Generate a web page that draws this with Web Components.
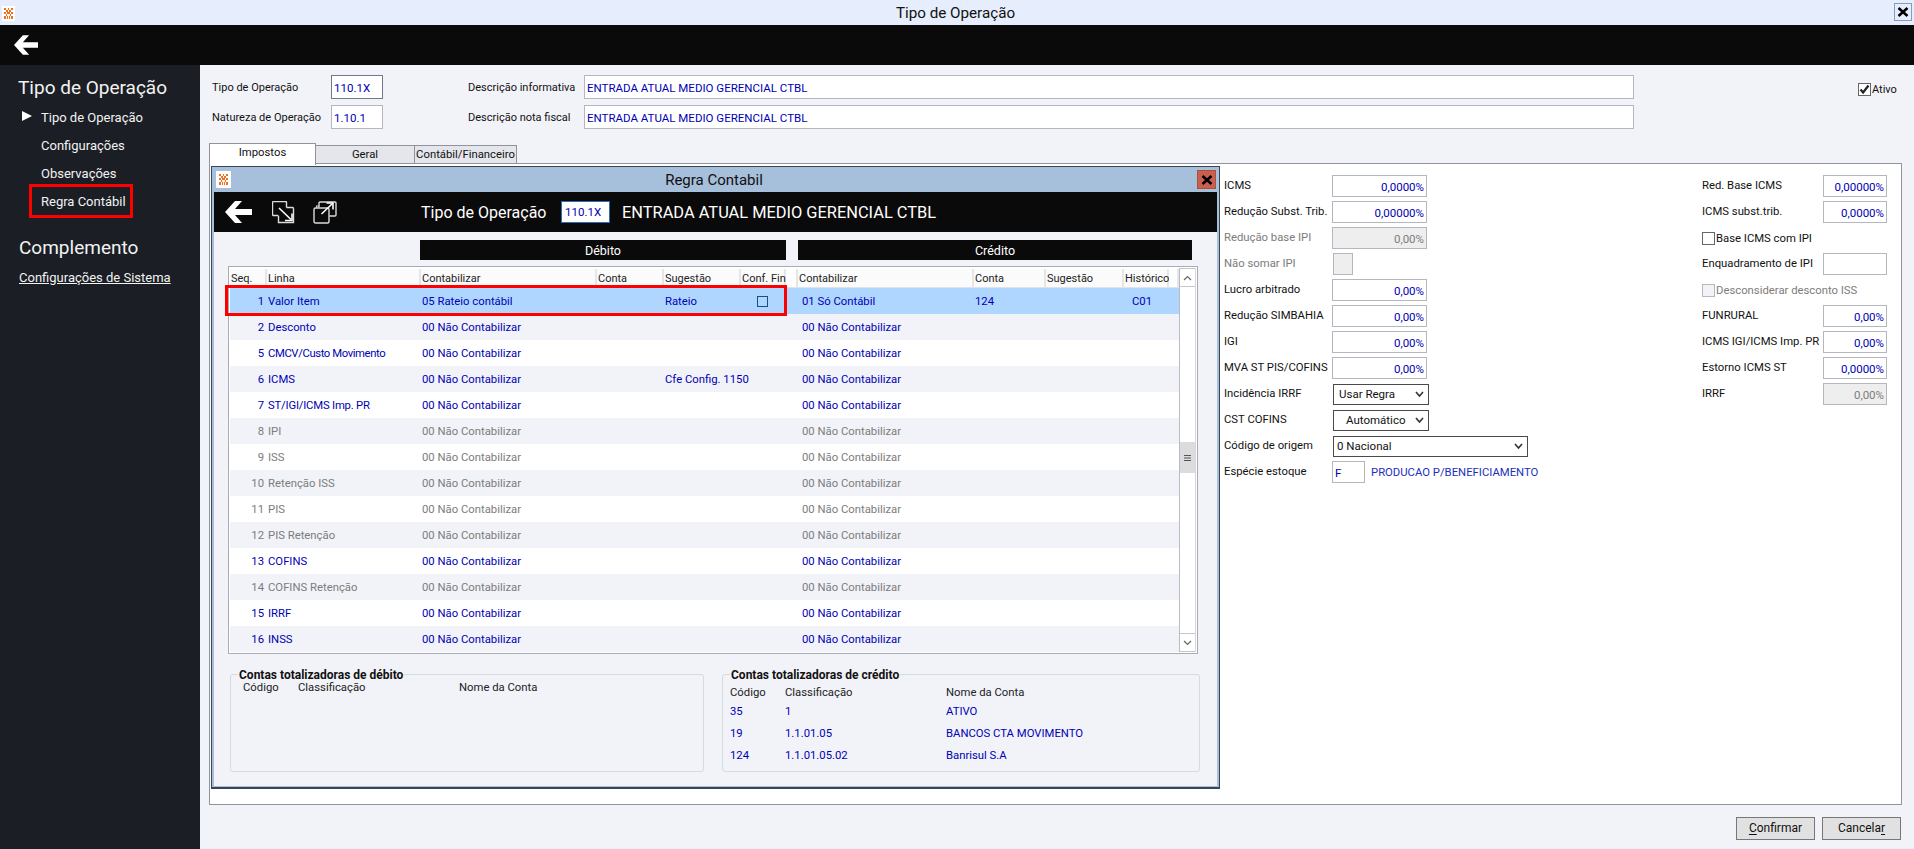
<!DOCTYPE html>
<html lang="pt-BR">
<head>
<meta charset="utf-8">
<title>Tipo de Operação</title>
<style>
  html, body { margin: 0; padding: 0; height: 100%; overflow: hidden; }
  body { font: 11px Roboto, "Liberation Sans", sans-serif; color: #111; background: #f1f3f9; }
  .main { display: flex; height: 784px; }
</style>
</head>
<body>
<erp-titlebar>Tipo de Operação</erp-titlebar>
<erp-toolbar></erp-toolbar>
<div class="main">
  <erp-sidebar></erp-sidebar>
  <erp-content></erp-content>
</div>
<script>
const BLUE = '#0000b4'
const GRAY = '#7c7c7c'

const logo = `<svg width="13" height="15" viewBox="0 0 13 15"><rect width="13" height="15" fill="#fff"/><path d="M2 2h2v2H2zM6 2h1v2H6zM9 2h2v2H9zM4 4h2v2H4zM7 4h2v2H7zM2 6h2v2H2zM5 6h3v2H5zM9 6h2v2H9zM4 8h1v2H4zM8 8h1v2H8zM2 10h2v3H2zM5 10h1v3H5zM7 10h1v3H7zM9 10h2v3H9z" fill="#f0701e"/></svg>`
const closeX = `<svg width="12" height="10" viewBox="0 0 12 10"><path d="M1.5 1l9 8M10.5 1l-9 8" stroke="#000" stroke-width="2.6" fill="none"/></svg>`
const backArrow = (w, h) => `<svg width="${w}" height="${h}" viewBox="0 0 27 22"><path d="M0 11 10 0h7l-7 8h17v6H10l7 8h-7z" fill="#fff"/></svg>`

class ErpTitlebar extends HTMLElement {
  constructor () {
    super()
    this.attachShadow({ mode: 'open' }).innerHTML = `
    <style>
      :host { display: flex; align-items: center; height: 25px; background: #e6edfd; padding: 0 2px; box-sizing: border-box; font-size: 15.2px; color: #111; }
      .logo { display: flex; width: 13px; margin-top: 1px; }
      .title { flex: 1; text-align: center; padding-left: 2px; }
      .close { display: flex; align-items: center; justify-content: center; width: 16px; height: 16px; border: 1px solid #8b9bbd; margin: -1px 0 0; }
    </style>
    <span class="logo">${logo}</span>
    <span class="title"><slot></slot></span>
    <span class="close">${closeX}</span>`
  }
}

class ErpToolbar extends HTMLElement {
  constructor () {
    super()
    this.attachShadow({ mode: 'open' }).innerHTML = `
    <style>
      :host { display: flex; align-items: center; height: 40px; background: #0a0a0a; padding-left: 14px; }
      svg { display: block; }
    </style>
    ${backArrow(24, 20)}`
  }
}

class ErpSidebar extends HTMLElement {
  constructor () {
    super()
    this.attachShadow({ mode: 'open' }).innerHTML = `
    <style>
      :host { display: block; width: 200px; flex: none; background: #1b1e25; color: #f2f2f2; padding-top: 12px; box-sizing: border-box; }
      h2 { margin: 0 0 4px 18px; font-size: 19px; line-height: 22px; font-weight: 400; }
      h2.second { margin: 22px 0 4px 19px; }
      .item { position: relative; display: flex; align-items: center; height: 28px; padding-left: 22px; font-size: 13px; }
      .mark { width: 10px; margin-right: 9px; flex: none; height: 10px; margin-top: -2px; }
      .mark.on { background: #fff; clip-path: polygon(0 0, 100% 50%, 0 100%); }
      .hl { position: absolute; left: 29px; top: -3px; width: 104px; height: 34px; box-sizing: border-box; border: 3px solid #f00; }
      .link { display: flex; align-items: center; height: 28px; padding-left: 19px; font-size: 13px; text-decoration: underline; }
    </style>
    <h2>Tipo de Operação</h2>
    <div class="item"><span class="mark on"></span>Tipo de Operação</div>
    <div class="item"><span class="mark"></span>Configurações</div>
    <div class="item"><span class="mark"></span>Observações</div>
    <div class="item"><span class="mark"></span>Regra Contábil<span class="hl"></span></div>
    <h2 class="second">Complemento</h2>
    <div class="link">Configurações de Sistema</div>`
  }
}

class ErpInput extends HTMLElement {
  constructor () {
    super()
    const w = this.getAttribute('w') || 64
    const h = this.getAttribute('h') || 22
    const disabled = this.hasAttribute('disabled')
    this.attachShadow({ mode: 'open' }).innerHTML = `
    <style>
      :host { display: block; flex: none; width: ${w}px; height: ${h}px; box-sizing: border-box; border: 1px solid ${this.hasAttribute('strong') ? '#6f7a8a' : '#b4b8be'}; background: ${disabled ? '#eee' : '#fff'}; color: ${disabled ? GRAY : BLUE}; font-size: 11.5px; line-height: ${h - 2}px; padding: 1px 2px 0 2px; overflow: hidden; white-space: nowrap; }
      :host([right]) { text-align: right; }
    </style><slot></slot>`
  }
}

class ErpCheck extends HTMLElement {
  constructor () {
    super()
    const disabled = this.hasAttribute('disabled')
    const checked = this.hasAttribute('checked')
    this.attachShadow({ mode: 'open' }).innerHTML = `
    <style>
      :host { display: flex; align-items: center; height: 22px; color: ${disabled ? GRAY : '#111'}; }
      .box { width: 13px; height: 13px; flex: none; margin-right: 1px; box-sizing: border-box; border: 1px solid ${disabled ? '#b8b8b8' : '#666'}; background: ${disabled ? '#f1f3f9' : '#fff'}; display: flex; }
    </style>
    <span class="box">${checked ? '<svg width="11" height="11" viewBox="0 0 11 11"><path d="M1.5 5.5l2.6 3L9.5 1.5" stroke="#222" stroke-width="2.2" fill="none"/></svg>' : ''}</span><slot></slot>`
  }
}

class ErpSelect extends HTMLElement {
  constructor () {
    super()
    const w = this.getAttribute('w') || 96
    this.attachShadow({ mode: 'open' }).innerHTML = `
    <style>
      :host { display: flex; align-items: center; flex: none; width: ${w}px; height: 21px; box-sizing: border-box; border: 1px solid #4a4a4a; background: #fff; padding: 0 4px 0 ${this.getAttribute('pad') || 5}px; font-size: 11.5px; }
      .text { flex: 1; }
    </style>
    <span class="text"><slot></slot></span>
    <svg width="9" height="7" viewBox="0 0 9 7"><path d="M1 1l3.5 4L8 1" stroke="#333" stroke-width="1.6" fill="none"/></svg>`
  }
}

class ErpHeader extends HTMLElement {
  constructor () {
    super()
    this.attachShadow({ mode: 'open' }).innerHTML = `
    <style>
      :host { display: grid; grid-template-columns: 119px 53px 84px 116px 1050px auto; grid-auto-rows: 24px; row-gap: 6px; padding: 10px 0 0 12px; align-items: center; height: 54px; }
      .ativo { margin-left: 224px; padding-top: 4px; }
    </style>
    <span>Tipo de Operação</span><erp-input w="52" h="24" strong>110.1X</erp-input><span></span>
    <span>Descrição informativa</span><erp-input w="1050" h="24">ENTRADA ATUAL MEDIO GERENCIAL CTBL</erp-input>
    <erp-check class="ativo" checked>Ativo</erp-check>
    <span>Natureza de Operação</span><erp-input w="52" h="24">1.10.1</erp-input><span></span>
    <span>Descrição nota fiscal</span><erp-input w="1050" h="24">ENTRADA ATUAL MEDIO GERENCIAL CTBL</erp-input>`
  }
}

class ErpTabs extends HTMLElement {
  constructor () {
    super()
    this.attachShadow({ mode: 'open' }).innerHTML = `
    <style>
      :host { display: flex; align-items: flex-end; height: 20px; margin: 14px 0 0 9px; position: relative; z-index: 1; }
      .tab { box-sizing: border-box; height: 18px; width: 100px; border: 1px solid #8f949c; border-bottom: 0; background: #e4e6ec; text-align: center; line-height: 18px; margin-left: -1px; font-size: 11.3px; }
      .on { width: 107px; height: 22px; margin: 0 0 -2px; background: #fff; line-height: 18px; padding-bottom: 3px; }
      .last { width: 103px; }
    </style>
    <div class="tab on">Impostos</div>
    <div class="tab">Geral</div>
    <div class="tab last">Contábil/Financeiro</div>`
  }
}

class RegraWindow extends HTMLElement {
  constructor () {
    super()
    this.attachShadow({ mode: 'open' }).innerHTML = `
    <style>
      :host { display: block; flex: none; width: 1009px; height: 623px; box-sizing: border-box; border: 1px solid #3a4452; border-bottom-width: 2px; background: #a6bfdb; padding: 0 2px 3px; margin: 2px 0 0 1px; }
      .title { display: flex; align-items: center; height: 25px; font-size: 15px; color: #111; }
      .logo { display: flex; padding: 1px; background: #fff; margin: 0 0 0 2px; }
      .name { flex: 1; text-align: center; }
      .close { display: flex; align-items: center; justify-content: center; width: 17px; height: 17px; background: #c9604e; border: 1px solid #a9503f; margin-right: 1px; }
      .bar { display: flex; align-items: center; height: 40px; background: #0a0a0a; color: #fff; font-size: 16.4px; padding-left: 11px; }
      .bar svg { display: block; flex: none; }
      .i1 { margin-left: 20px; }
      .i2 { margin-left: 18px; }
      .op { margin-left: 84px; width: 140px; white-space: nowrap; font-size: 16px; }
      .code { box-sizing: border-box; width: 49px; height: 22px; background: #fff; border: 1px solid #2e6cb0; color: ${BLUE}; font-size: 11.5px; line-height: 20px; padding-left: 3px; margin-right: 12px; }
      .body { height: 554px; background: #f1f3f9; padding-top: 8px; box-sizing: border-box; }
      .heads { display: flex; margin-left: 206px; gap: 12px; }
      .head { height: 20px; background: #0a0a0a; color: #fff; text-align: center; line-height: 21px; font-size: 12.5px; }
      .boxes { display: flex; margin: 20px 0 0 16px; gap: 18px; }
    </style>
    <div class="title"><span class="logo">${logo}</span><span class="name">Regra Contabil</span><span class="close">${closeX}</span></div>
    <div class="bar">
      ${backArrow(27, 22)}
      <svg class="i1" width="23" height="23" viewBox="0 0 23 23" fill="none" stroke="#dcdcdc" stroke-width="1.4"><path d="M6 14.500H1.500a1 1 0 0 1-1-1V1.500a1 1 0 0 1 1-1h12a1 1 0 0 1 1 1V6.500"/><path d="M6.500 14.500v7h15V7.500a1 1 0 0 0-1-1h-6"/><path d="M7 7l12 11.500" stroke="#fff" stroke-width="1.6"/><path d="M20 12.500v7h-7" stroke="#fff" stroke-width="1.6"/></svg>
      <svg class="i2" width="24" height="23" viewBox="0 0 24 23" fill="none" stroke="#dcdcdc" stroke-width="1.4"><rect x="1" y="7" width="15" height="15" rx="1.500"/><path d="M6 6.500V2a1 1 0 0 1 1-1h15a1 1 0 0 1 1 1v12a1 1 0 0 1-1 1h-5.500"/><path d="M3.500 6.500V5h2.500" stroke-width="1.100"/><path d="M8.500 13l11-10.500" stroke="#fff" stroke-width="1.600"/><path d="M13.500 2h6.500v6.500" stroke="#fff" stroke-width="1.600"/></svg>
      <span class="op">Tipo de Operação</span>
      <span class="code">110.1X</span>
      <span>ENTRADA ATUAL MEDIO GERENCIAL CTBL</span>
    </div>
    <div class="body">
      <div class="heads"><div class="head" style="width:366px">Débito</div><div class="head" style="width:394px">Crédito</div></div>
      <regra-grid></regra-grid>
      <div class="boxes">
        <totals-box w="474" off="13" title="Contas totalizadoras de débito"></totals-box>
        <totals-box w="478" off="8" title="Contas totalizadoras de crédito" rows="35|1|ATIVO;19|1.1.01.05|BANCOS CTA MOVIMENTO;124|1.1.01.05.02|Banrisul S.A"></totals-box>
      </div>
    </div>`
  }
}

const GRID_COLS = '37px 154px 176px 67px 77px 45px 12px 176px 72px 78px 45px 10px'
// caps run wider here than in the original font, hence the spacing on the two long names
const GRID_ROWS = [
  ['1', 'Valor Item', 1], ['2', 'Desconto', 1], ['5', 'CMCV/Custo Movimento', 1, -0.4], ['6', 'ICMS', 1],
  ['7', 'ST/IGI/ICMS Imp. PR', 1, -0.2], ['8', 'IPI', 0], ['9', 'ISS', 0], ['10', 'Retenção ISS', 0],
  ['11', 'PIS', 0], ['12', 'PIS Retenção', 0], ['13', 'COFINS', 1], ['14', 'COFINS Retenção', 0],
  ['15', 'IRRF', 1], ['16', 'INSS', 1]
]

class RegraGrid extends HTMLElement {
  constructor () {
    super()
    const heads = ['Seq.', 'Linha', 'Contabilizar', 'Conta', 'Sugestão', 'Conf. Fin', '', 'Contabilizar', 'Conta', 'Sugestão', 'Histórico', '']
    const rows = GRID_ROWS.map((r, i) => {
      const first = i === 0
      const cls = first ? 'sel' : (i % 2 ? 'alt' : '')
      return `<div class="row ${cls}" style="color:${r[2] ? BLUE : GRAY}">
        <span class="seq">${r[0]}</span><span style="letter-spacing:${r[3] || 0}px">${r[1]}</span>
        <span>${first ? '05 Rateio contábil' : '00 Não Contabilizar'}</span><span></span>
        <span>${first ? 'Rateio' : (r[1] === 'ICMS' ? 'Cfe Config. 1150' : '')}</span>
        <span>${first ? '<i class="chk"></i>' : ''}</span><span></span>
        <span class="cr">${first ? '01 Só Contábil' : '00 Não Contabilizar'}</span>
        <span>${first ? '124' : ''}</span><span></span>
        <span class="hist">${first ? 'C01' : ''}</span><span></span>
      </div>`
    }).join('')
    this.attachShadow({ mode: 'open' }).innerHTML = `
    <style>
      :host { display: flex; position: relative; width: 970px; height: 388px; box-sizing: border-box; margin: 6px 0 0 14px; border: 1px solid #a9adb3; padding: 1px; background: #fff; font-size: 11.3px; }
      .table { width: 949px; flex: none; }
      .row, .hrow { display: grid; grid-template-columns: ${GRID_COLS}; align-items: center; white-space: nowrap; }
      .hrow { height: 20px; color: #222; font-size: 11px; }
      .hrow span { height: 19px; line-height: 19px; background: #fbfbfb; border-right: 2px solid #e4e6ea; border-bottom: 1px solid #dfe2e6; padding-left: 1px; box-sizing: border-box; }
      .hrow span.blank { background: #fff; }
      .row { height: 26px; background: #fff; }
      .row span { padding-left: 1px; }
      .alt { background: #f1f3f9; }
      .sel { background: #aed6ff; }
      .seq { text-align: right; padding-right: 3px; }
      .cr { padding-left: 4px !important; }
      .hist { padding-left: 8px !important; }
      .chk { display: block; width: 11px; height: 11px; box-sizing: border-box; border: 1px solid #134f8c; margin-left: 15px; }
      .bar { width: 17px; flex: none; box-sizing: border-box; display: flex; flex-direction: column; border-left: 1px solid #b9bdc3; border-right: 1px solid #d6d8dc; }
      .btn { height: 17px; display: flex; align-items: center; justify-content: center; border-bottom: 1px solid #c4c7cc; border-top: 1px solid #c4c7cc; flex: none; background: #fff; }
      .track { height: 155px; flex: none; }
      .thumb { height: 31px; flex: none; background: #dcdcde; display: flex; align-items: center; justify-content: center; }
      .track2 { flex: 1; }
      .hl { position: absolute; left: -4px; top: 18px; width: 562px; height: 31px; box-sizing: border-box; border: 3px solid #f00; }
    </style>
    <div class="table">
      <div class="hrow">${heads.map(h => `<span class="${h ? '' : 'blank'}">${h}</span>`).join('')}</div>
      ${rows}
    </div>
    <div class="bar">
      <div class="btn"><svg width="9" height="6" viewBox="0 0 9 6"><path d="M1 5l3.5-3.5L8 5" stroke="#666" stroke-width="1.2" fill="none"/></svg></div>
      <div class="track"></div>
      <div class="thumb"><svg width="9" height="8" viewBox="0 0 9 8"><path d="M1 1.5h7M1 4h7M1 6.500h7" stroke="#555" stroke-width="1.2"/></svg></div>
      <div class="track2"></div>
      <div class="btn"><svg width="9" height="6" viewBox="0 0 9 6"><path d="M1 1l3.5 3.500L8 1" stroke="#666" stroke-width="1.2" fill="none"/></svg></div>
    </div>
    <div class="hl"></div>`
  }
}

class TotalsBox extends HTMLElement {
  constructor () {
    super()
    const off = this.getAttribute('off')
    const rows = (this.getAttribute('rows') || '').split(';').filter(Boolean).map(r => r.split('|'))
    const hasRows = rows.length > 0
    this.attachShadow({ mode: 'open' }).innerHTML = `
    <style>
      :host { display: block; box-sizing: border-box; flex: none; width: ${this.getAttribute('w')}px; height: 98px; border: 1px solid #d4dade; border-radius: 3px; padding-left: ${off - 1}px; font-size: 11.3px; }
      .legend { display: block; width: max-content; height: 14px; line-height: 14px; margin: -7px 0 0 ${8 - off}px; padding: 0 1px; background: #f1f3f9; font-weight: 700; font-size: 12px; color: #111; }
      .row { display: grid; grid-template-columns: 55px 161px auto; height: 22px; align-items: center; }
      .cols { height: 14px; margin-top: ${hasRows ? 3 : -2}px; margin-bottom: 1px; color: #222; }
      .val { color: ${BLUE}; }
    </style>
    <span class="legend">${this.getAttribute('title')}</span>
    <div class="row cols"><span>Código</span><span>Classificação</span><span>Nome da Conta</span></div>
    ${rows.map(r => `<div class="row val"><span>${r[0]}</span><span>${r[1]}</span><span>${r[2]}</span></div>`).join('')}`
  }
}

class FiscalForm extends HTMLElement {
  constructor () {
    super()
    const field = (label, value, gray) => `<span class="lbl${gray ? ' off' : ''}">${label}</span>${value}`
    const pct = (v, w, dis) => `<erp-input w="${w}" right${dis ? ' disabled' : ''}>${v}</erp-input>`
    this.attachShadow({ mode: 'open' }).innerHTML = `
    <style>
      :host { display: flex; flex: none; padding: 11px 0 0 4px; font-size: 11.3px; }
      .col { display: grid; align-items: center; grid-auto-rows: 22px; row-gap: 4px; align-content: start; }
      .left { width: 478px; grid-template-columns: 108px auto; }
      .right { grid-template-columns: 121px auto; }
      .lbl { padding-bottom: 1px; white-space: nowrap; }
      .off { color: ${GRAY}; }
      .wide { grid-column: 1 / span 2; }
      .esp { display: flex; align-items: center; gap: 6px; }
      .esp b { font-weight: 400; color: #1a2fc0; white-space: nowrap; }
      .nosum { display: block; box-sizing: border-box; width: 20px; height: 22px; background: #eee; border: 1px solid #b4b8be; }
    </style>
    <div class="col left">
      ${field('ICMS', pct('0,0000%', 95))}
      ${field('Redução Subst. Trib.', pct('0,00000%', 95))}
      ${field('Redução base IPI', pct('0,00%', 95, 1), 1)}
      ${field('Não somar IPI', '<span class="nosum" style="margin-left:1px"></span>', 1)}
      ${field('Lucro arbitrado', pct('0,00%', 95))}
      ${field('Redução SIMBAHIA', pct('0,00%', 95))}
      ${field('IGI', pct('0,00%', 95))}
      ${field('MVA ST PIS/COFINS', pct('0,00%', 95))}
      ${field('Incidência IRRF', '<erp-select w="96" style="margin-left:1px">Usar Regra</erp-select>')}
      ${field('CST COFINS', '<erp-select w="96" pad="12" style="margin-left:1px">Automático</erp-select>')}
      ${field('Código de origem', '<erp-select w="195" pad="3" style="margin-left:1px">0 Nacional</erp-select>')}
      ${field('Espécie estoque', '<div class="esp"><erp-input w="33">F</erp-input><b>PRODUCAO P/BENEFICIAMENTO</b></div>')}
    </div>
    <div class="col right">
      ${field('Red. Base ICMS', pct('0,00000%', 64))}
      ${field('ICMS subst.trib.', pct('0,0000%', 64))}
      <erp-check class="wide">Base ICMS com IPI</erp-check>
      ${field('Enquadramento de IPI', '<erp-input w="64"></erp-input>')}
      <erp-check class="wide" disabled>Desconsiderar desconto ISS</erp-check>
      ${field('FUNRURAL', pct('0,00%', 64))}
      ${field('ICMS IGI/ICMS Imp. PR', pct('0,00%', 64))}
      ${field('Estorno ICMS ST', pct('0,0000%', 64))}
      ${field('IRRF', pct('0,00%', 64, 1))}
    </div>`
  }
}

class ErpContent extends HTMLElement {
  constructor () {
    super()
    this.attachShadow({ mode: 'open' }).innerHTML = `
    <style>
      :host { display: block; flex: 1; min-width: 0; background: #f1f3f9; box-sizing: border-box; border-bottom: 1px solid #e6edfd; }
      .panel { display: flex; box-sizing: border-box; width: 1693px; height: 642px; margin-left: 9px; border: 1px solid #8f949c; background: #fff; }
      .foot { display: flex; justify-content: flex-end; gap: 7px; margin-top: 12px; padding-right: 13px; }
      .btn { box-sizing: border-box; width: 79px; height: 23px; border: 1px solid #777; background: #e1e1e1; text-align: center; line-height: 21px; font-size: 12px; }
      u { text-underline-offset: 2px; }
    </style>
    <erp-header></erp-header>
    <erp-tabs></erp-tabs>
    <div class="panel"><regra-window></regra-window><fiscal-form></fiscal-form></div>
    <div class="foot"><div class="btn"><u>C</u>onfirmar</div><div class="btn">Cancela<u>r</u></div></div>`
  }
}

window.customElements.define('erp-titlebar', ErpTitlebar)
window.customElements.define('erp-toolbar', ErpToolbar)
window.customElements.define('erp-sidebar', ErpSidebar)
window.customElements.define('erp-input', ErpInput)
window.customElements.define('erp-check', ErpCheck)
window.customElements.define('erp-select', ErpSelect)
window.customElements.define('erp-header', ErpHeader)
window.customElements.define('erp-tabs', ErpTabs)
window.customElements.define('regra-window', RegraWindow)
window.customElements.define('regra-grid', RegraGrid)
window.customElements.define('totals-box', TotalsBox)
window.customElements.define('fiscal-form', FiscalForm)
window.customElements.define('erp-content', ErpContent)
</script>
</body>
</html>
